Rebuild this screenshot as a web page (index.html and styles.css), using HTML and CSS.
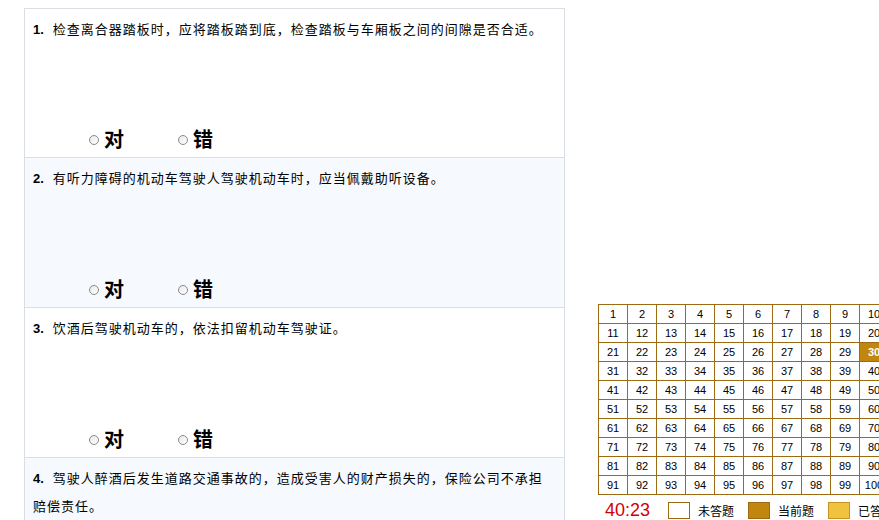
FILE: index.html
```html
<!DOCTYPE html>
<html lang="zh">
<head>
<meta charset="utf-8">
<link rel="stylesheet" href="styles.css">
</head>
<body>
<div class="page">
  <div class="questions">
    <div class="q">
      <div class="q-text"><b class="num">1.</b>检查离合器踏板时，应将踏板踏到底，检查踏板与车厢板之间的间隙是否合适。</div>
      <div class="opts">
        <label class="opt"><span class="radio"></span>对</label>
        <label class="opt"><span class="radio"></span>错</label>
      </div>
    </div>
    <div class="q alt">
      <div class="q-text"><b class="num">2.</b>有听力障碍的机动车驾驶人驾驶机动车时，应当佩戴助听设备。</div>
      <div class="opts">
        <label class="opt"><span class="radio"></span>对</label>
        <label class="opt"><span class="radio"></span>错</label>
      </div>
    </div>
    <div class="q">
      <div class="q-text"><b class="num">3.</b>饮酒后驾驶机动车的，依法扣留机动车驾驶证。</div>
      <div class="opts">
        <label class="opt"><span class="radio"></span>对</label>
        <label class="opt"><span class="radio"></span>错</label>
      </div>
    </div>
    <div class="q alt">
      <div class="q-text"><b class="num">4.</b>驾驶人醉酒后发生道路交通事故的，造成受害人的财产损失的，保险公司不承担赔偿责任。</div>
    </div>
  </div>
  <div class="side">
    <table class="grid">
      <tr><td>1</td><td>2</td><td>3</td><td>4</td><td>5</td><td>6</td><td>7</td><td>8</td><td>9</td><td>10</td></tr>
      <tr><td>11</td><td>12</td><td>13</td><td>14</td><td>15</td><td>16</td><td>17</td><td>18</td><td>19</td><td>20</td></tr>
      <tr><td>21</td><td>22</td><td>23</td><td>24</td><td>25</td><td>26</td><td>27</td><td>28</td><td>29</td><td class="cur">30</td></tr>
      <tr><td>31</td><td>32</td><td>33</td><td>34</td><td>35</td><td>36</td><td>37</td><td>38</td><td>39</td><td>40</td></tr>
      <tr><td>41</td><td>42</td><td>43</td><td>44</td><td>45</td><td>46</td><td>47</td><td>48</td><td>49</td><td>50</td></tr>
      <tr><td>51</td><td>52</td><td>53</td><td>54</td><td>55</td><td>56</td><td>57</td><td>58</td><td>59</td><td>60</td></tr>
      <tr><td>61</td><td>62</td><td>63</td><td>64</td><td>65</td><td>66</td><td>67</td><td>68</td><td>69</td><td>70</td></tr>
      <tr><td>71</td><td>72</td><td>73</td><td>74</td><td>75</td><td>76</td><td>77</td><td>78</td><td>79</td><td>80</td></tr>
      <tr><td>81</td><td>82</td><td>83</td><td>84</td><td>85</td><td>86</td><td>87</td><td>88</td><td>89</td><td>90</td></tr>
      <tr><td>91</td><td>92</td><td>93</td><td>94</td><td>95</td><td>96</td><td>97</td><td>98</td><td>99</td><td>100</td></tr>
    </table>
    <div class="legend">
      <span class="timer">40:23</span>
      <span class="box box-none"></span><span class="lbl">未答题</span>
      <span class="box box-cur"></span><span class="lbl">当前题</span>
      <span class="box box-done"></span><span class="lbl">已答题</span>
    </div>
  </div>
</div>
</body>
</html>
```
FILE: styles.css
```css
html, body {
  margin: 0;
  padding: 0;
  overflow: hidden;
  background: #fff;
}
body {
  width: 879px;
  height: 520px;
  font-family: "Noto Sans CJK SC", "Liberation Sans", sans-serif;
  color: #000;
}
.page {
  display: flex;
  align-items: flex-start;
  padding: 8px 0 0 24px;
  width: 1000px;
}
.questions {
  width: 539px;
  border: 1px solid #d9dee4;
  border-bottom: none;
  flex: none;
}
.q {
  height: 149px;
  border-bottom: 1px solid #d9dee4;
  background: #fff;
  display: flex;
  flex-direction: column;
  padding: 6px 8px 0 8px;
  box-sizing: border-box;
}
.q + .q { height: 150px; }
.q.alt { background: #f6f9fe; }
.q-text {
  font-size: 13px;
  letter-spacing: 1px;
  line-height: 27px;
  width: 517px;
}
.num {
  font-family: "Liberation Sans", Arial, sans-serif;
  font-size: 13px;
  font-weight: bold;
  letter-spacing: 0;
  margin-right: 9px;
}
.opts {
  margin-top: auto;
  display: flex;
  padding-left: 56px;
  height: 26px;
  align-items: center;
  margin-bottom: 5px;
}
.opt {
  display: flex;
  align-items: center;
  font-family: "Noto Sans CJK SC", serif;
  font-size: 20px;
  font-weight: bold;
  width: 89px;
  line-height: 22px;
}
.radio {
  width: 8px;
  height: 8px;
  border: 1px solid #8a8a8a;
  border-radius: 50%;
  background: linear-gradient(135deg, #e8e8e8, #fff);
  margin-right: 5px;
  margin-top: 2px;
  box-sizing: content-box;
}
.side {
  margin-left: 33px;
  padding-top: 296px;
  flex: none;
}
.grid {
  border-collapse: collapse;
  font-family: "Liberation Sans", Arial, sans-serif;
  font-size: 11px;
}
.grid td {
  border: 1px solid #9c6a12;
  width: 28px;
  height: 18px;
  padding: 0;
  text-align: center;
  background: #fff;
  line-height: 18px;
  white-space: nowrap;
}
.grid td.cur {
  background: #c0860e;
  color: #fff;
  font-weight: bold;
}
.legend {
  display: flex;
  align-items: center;
  height: 30px;
  font-size: 12px;
}
.timer {
  color: #d40000;
  font-family: "Liberation Sans", Arial, sans-serif;
  font-size: 18px;
  margin-left: 7px;
  width: 63px;
}
.box {
  width: 20px;
  height: 15px;
  border: 1px solid #9c6a12;
  margin-right: 8px;
}
.box-none { background: #fff; }
.box-cur { background: #c0860e; }
.box-done { background: #f1c23e; border-color: #c69424; }
.lbl {
  width: 50px;
}
```
